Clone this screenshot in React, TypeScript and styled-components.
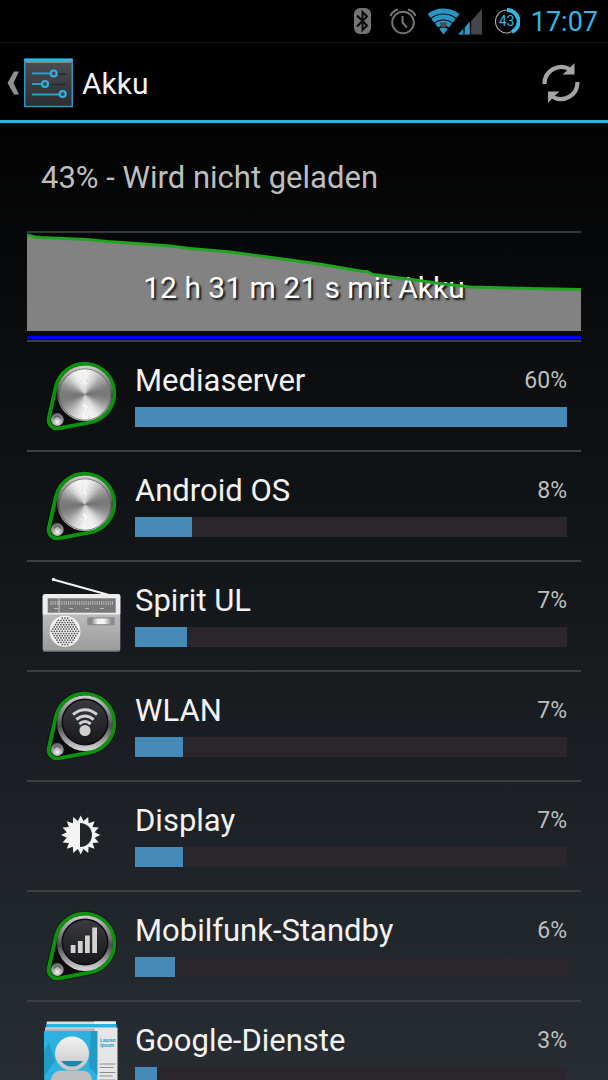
import React from 'react';
import styled, { createGlobalStyle } from 'styled-components';

const GlobalStyle = createGlobalStyle`
  * { box-sizing: border-box; }
  html, body { margin: 0; background: #000; }
  body { font-family: Roboto, "Liberation Sans", sans-serif; color: #f3f3f3; }
`;

const Screen = styled.div`
  height: 100vh;
  display: flex;
  flex-direction: column;
  overflow: hidden;
  background: linear-gradient(#000 0%, #000 6%, #272d33 100%);
`;

const StatusBar = styled.div`
  flex: none;
  height: 43px;
  padding: 0 10px;
  display: flex;
  align-items: center;
  justify-content: flex-end;
  gap: 11px;
  background: #000;
  border-bottom: 1px solid #161616;
`;

const Clock = styled.time`
  padding-top: 2px;
  font-size: 27px;
  line-height: 40px;
  color: #33b5e5;
`;

const ActionBar = styled.header`
  flex: none;
  height: 80px;
  padding: 2px 25px 0 6px;
  display: flex;
  align-items: center;
  background: #000;
  border-bottom: 3px solid #2ab4e4;
`;

const BarButton = styled.button`
  display: flex;
  align-items: center;
  gap: 4px;
  padding: 0;
  border: 0;
  background: none;
  color: inherit;
`;

const Title = styled.h1`
  flex: 1;
  margin: 2px 0 0 9px;
  font-size: 30px;
  line-height: 36px;
  font-weight: 400;
`;

const Content = styled.main`
  flex: 1;
  min-height: 0;
  padding: 0 27px;
  overflow-y: auto;
  scrollbar-width: none;
`;

const Summary = styled.p`
  margin: 0;
  padding: 2px 14px 0;
  font-size: 31px;
  line-height: 106px;
  color: #bebebe;
`;

const History = styled.section`
  display: grid;
  height: 109px;
  border-top: 2px solid #343638;
  > * { grid-area: 1 / 1; }
`;

const Plot = styled.svg`
  display: block;
  width: 100%;
  height: 107px;
`;

const Duration = styled.p`
  margin: 0;
  padding-top: 37px;
  text-align: center;
  font-size: 30px;
  line-height: 36px;
  color: #fff;
  text-shadow: 2px 2px 2px #101418;
`;

const List = styled.ul`
  margin: 0;
  padding: 0;
  list-style: none;
`;

const Row = styled.li`
  height: 110px;
  padding-right: 14px;
  display: flex;
  align-items: center;
  gap: 14px;
  border-top: 2px solid #3b3f42;
`;

const IconSlot = styled.span`
  flex: none;
  width: 94px;
  padding-bottom: 2px;
  display: flex;
  justify-content: flex-end;
`;

const Usage = styled.div`
  flex: 1;
  display: flex;
  flex-direction: column;
  gap: 8px;
  padding-bottom: 2px;
`;

const Labels = styled.div`
  display: flex;
  justify-content: space-between;
  align-items: center;
  line-height: 36px;
`;

const Name = styled.span`
  font-size: 31px;
`;

const Percent = styled.span`
  font-size: 23px;
  color: #bebebe;
`;

const Track = styled.div`
  height: 20px;
  background: #2a262c;
`;

const Fill = styled.div`
  height: 100%;
  background: #468bb8;
`;

const BluetoothIcon = () => (
  <svg width="25" height="28" viewBox="0 0 25 28" aria-label="Bluetooth">
    <rect x="1" y="1" width="17" height="26" rx="6" fill="#747474" />
    <path d="M4 8.500 14 18.500 9.500 23V5l4.500 4.500L4 19.500" fill="none" stroke="#0a0a0a" strokeWidth="2" />
  </svg>
);

const AlarmIcon = () => (
  <svg width="27" height="28" viewBox="0 0 27 28" fill="none" stroke="#747474" aria-label="Wecker">
    <circle cx="14" cy="15.500" r="10.800" strokeWidth="2" />
    <path d="M13.500 9V15.500l4.500 5" strokeWidth="2" />
    <path d="M1.500 9Q3.500 4 9 2.500M26.500 9Q24.500 4 19 2.500" strokeWidth="2.200" />
  </svg>
);

const NetworkIcon = () => (
  <svg width="56" height="28" viewBox="0 0 56 28" aria-label="WLAN und Mobilfunk">
    <defs>
      <clipPath id="fan"><path d="M16.500 27.500-1 5Q16.500-4 34 5Z" /></clipPath>
    </defs>
    <g clipPath="url(#fan)" fill="none" stroke="#2b95c4" strokeWidth="4.900">
      <circle cx="16.500" cy="27.500" r="23.500" />
      <circle cx="16.500" cy="27.500" r="17.500" />
      <circle cx="16.500" cy="27.500" r="11.500" />
      <circle cx="16.500" cy="27.500" r="3.500" strokeWidth="7" />
    </g>
    <path d="M12.500 15.500h8l-2 5h-4z" fill="#4b4b4f" />
    <path d="M32 27.500 55 2V27.500z" fill="#45464b" />
    <path d="M31 27.500 43 14.500V27.500z" fill="#2b95c4" />
    <path d="M37 17V27.500M43.500 10V27.500" stroke="#000" strokeWidth="1.200" />
  </svg>
);

const BatteryIcon = () => (
  <svg width="26" height="28" viewBox="0 0 26 28" aria-label="Akku 43 %">
    <circle cx="13" cy="14.500" r="11.500" fill="none" stroke="#a8a8a8" strokeWidth="1.200" />
    <path d="M13 3A11.500 11.500 0 0 1 18 24.900" fill="none" stroke="#33b5e5" strokeWidth="4" />
    <text x="12.500" y="19" textAnchor="middle" fontSize="14" fill="#33b5e5">43</text>
  </svg>
);

const ChevronIcon = () => (
  <svg width="14" height="26" viewBox="0 0 14 26">
    <path d="M8 1.500H13L7.500 13 13 24.500H8L1.500 13z" fill="#8f8f8f" />
  </svg>
);

const SettingsIcon = () => (
  <svg width="49" height="50" viewBox="0 0 49 50">
    <defs>
      <linearGradient id="slate" x1="0" y1="0" x2="0" y2="1">
        <stop offset="0" stopColor="#4c4e51" />
        <stop offset="1" stopColor="#2c2d2f" />
      </linearGradient>
    </defs>
    <rect x="0.750" y="1.500" width="47.500" height="47" fill="url(#slate)" stroke="#2796c4" strokeWidth="1.500" />
    <path d="M0.500 1.800H48.500" stroke="#33b5e5" strokeWidth="2.600" />
    <path d="M1.500 4H47.500" stroke="#9aa0a4" strokeWidth="1.500" />
    <path d="M8 16H42M8 26.500H42" stroke="#1f2a30" strokeWidth="1.500" />
    <path d="M8 15.500H27M8 26H18M8 36.500H36" stroke="#2a9fcb" strokeWidth="2" />
    <g fill="#44484b" stroke="#2fb0dd" strokeWidth="2.200">
      <circle cx="29.700" cy="15.500" r="3" />
      <circle cx="21" cy="26" r="3" />
      <circle cx="38.700" cy="36" r="3" />
    </g>
  </svg>
);

const RefreshIcon = () => (
  <svg width="44" height="44" viewBox="0 0 44 44">
    <path d="M5.500 23A16.700 16.700 0 0 1 31 8.500M38.500 21A16.700 16.700 0 0 1 13 35.500" fill="none" stroke="#a4a4a4" strokeWidth="4.200" />
    <path d="M35.500 2V13.500H23.500L28 9.500ZM9 42V30.500H20.500L16 34.500Z" fill="#a4a4a4" />
  </svg>
);

const WEDGES = 72;

const wedge = (index: number, cx: number, cy: number, r: number) => {
  const a = (index / WEDGES) * Math.PI * 2;
  const b = a + (Math.PI * 2) / WEDGES + 0.02;
  const wave = Math.pow(Math.abs(Math.sin(a + 0.12)), 2);
  const side = Math.pow(Math.abs(Math.cos(a - 0.9)), 8) * 0.1;
  const light = Math.round(122 + 122 * Math.min(1, wave + side));
  return (
    <path
      key={index}
      d={`M${cx} ${cy}L${cx + r * Math.cos(a)} ${cy + r * Math.sin(a)}L${cx + r * Math.cos(b)} ${cy + r * Math.sin(b)}Z`}
      fill={`rgb(${light},${light},${light})`}
    />
  );
};

const Knob = ({ children }: { children?: React.ReactNode }) => (
  <svg width="80" height="80" viewBox="0 0 80 80">
    <defs>
      <linearGradient id="rim" x1="0" y1="0" x2="0" y2="1">
        <stop offset="0" stopColor="#d0d0d0" />
        <stop offset="0.300" stopColor="#858585" />
        <stop offset="0.550" stopColor="#4c4c4c" />
        <stop offset="1" stopColor="#dcdcdc" />
      </linearGradient>
      <linearGradient id="well" x1="0" y1="0" x2="0" y2="1">
        <stop offset="0" stopColor="#3a3b3f" />
        <stop offset="1" stopColor="#17181b" />
      </linearGradient>
      <radialGradient id="rivet" cx="0.500" cy="0.700" r="0.600">
        <stop offset="0" stopColor="#f8f8f8" />
        <stop offset="1" stopColor="#6c6c6c" />
      </radialGradient>
    </defs>
    <path d="M14.800 31.800A29.600 29.600 0 1 1 49.100 67.400L17.500 73.300A8.400 8.400 0 0 1 7.800 63.200Z" fill="none" stroke="#000" strokeOpacity="0.300" strokeWidth="6" />
    <circle cx="43.700" cy="38.300" r="28.400" fill="url(#rim)" />
    <path d="M15.500 42 16 58 30 63.500A28.400 28.400 0 0 1 15.500 42Z" fill="#0b0c0e" />
    <path d="M14.800 31.800A29.600 29.600 0 1 1 49.100 67.400L17.500 73.300A8.400 8.400 0 0 1 7.800 63.200Z" fill="#0b0c0e" stroke="#0b930b" strokeWidth="3.800" />
    <circle cx="43.900" cy="38.200" r="27.800" fill="url(#rim)" />
    {children ? (
      <>
        <circle cx="44" cy="37" r="23.500" fill="#0c0c0e" />
        <circle cx="44" cy="37" r="22" fill="url(#well)" />
        {children}
      </>
    ) : (
      <>
        <circle cx="44" cy="39.500" r="26" fill="#6a6a6a" />
        {Array.from({ length: WEDGES }, (_, i) => wedge(i, 44, 39.5, 25.2))}
      </>
    )}
    <circle cx="16.300" cy="64.500" r="6.500" fill="url(#rivet)" />
    <path d="M13 63.500A3.500 3.500 0 0 1 19.600 63.500" fill="none" stroke="#5c5c5c" strokeWidth="1.200" />
  </svg>
);

const WifiKnob = () => (
  <Knob>
    <g fill="none" stroke="#d2d2d2" strokeWidth="3">
      <path d="M32 29.500Q44 20 56 29.500" />
      <path d="M35.300 34.500Q44 27.500 52.700 34.500" />
      <path d="M38.300 39Q44 34 49.700 39" />
    </g>
    <circle cx="44" cy="45.500" r="5.600" fill="#cfcfcf" />
  </Knob>
);

const CellKnob = () => (
  <Knob>
    <path d="M29.700 40h4.800v8h-4.800zM36.900 36h4.800v12h-4.800zM44 30.500h4.800V48H44zM51.200 22.500H56V48h-4.800z" fill="#d2d2d2" />
  </Knob>
);

const grille: React.ReactNode[] = [];
for (let row = -6; row <= 6; row++) {
  for (let col = -5; col <= 5; col++) {
    const x = col * 2.7 + (row % 2 ? 1.35 : 0);
    const y = row * 2.2;
    if (Math.hypot(x, y) < 13.6) {
      grille.push(<circle key={`${row}:${col}`} cx={24 + x} cy={56.3 + y} r="0.85" fill="#555" />);
    }
  }
}

const RadioIcon = () => (
  <svg width="80" height="80" viewBox="0 0 80 80">
    <defs>
      <linearGradient id="case" x1="0" y1="0" x2="0" y2="1">
        <stop offset="0" stopColor="#cdcdcd" />
        <stop offset="1" stopColor="#9a9a9a" />
      </linearGradient>
      <linearGradient id="glass">
        <stop offset="0" stopColor="#777" />
        <stop offset="0.350" stopColor="#f4f4f4" />
        <stop offset="0.650" stopColor="#f4f4f4" />
        <stop offset="1" stopColor="#888" />
      </linearGradient>
    </defs>
    <path d="M12 4.500 68 20" stroke="#f2f2f2" strokeWidth="2.200" />
    <circle cx="12.500" cy="4.500" r="1.700" fill="#f2f2f2" />
    <rect x="1.700" y="19" width="77.600" height="57.500" rx="2.500" fill="url(#case)" />
    <path d="M1.700 39.500V21.500Q1.700 19 4.200 19H76.800Q79.300 19 79.300 21.500V39.500Z" fill="#ececec" />
    <rect x="6.700" y="23.300" width="68" height="14.400" fill="#777" />
    <path d="M9.500 28H72" stroke="#b4b4b4" strokeWidth="4" strokeDasharray="1 1.200" />
    <path d="M13 33.500h4M28 33.500h4M44 33.500h4M59 33.500h4" stroke="#bbb" strokeWidth="1.200" />
    <path d="M18 23.500V37.500" stroke="#ccc" strokeWidth="1" />
    <circle cx="24" cy="56.300" r="15.500" fill="#efefef" />
    {grille}
    <rect x="46.300" y="42.300" width="27.400" height="8" fill="#8b8b8b" />
    <rect x="49.500" y="43.500" width="21" height="5.600" fill="url(#glass)" />
    <path d="M2 75.800H79" stroke="#777" strokeWidth="1" />
  </svg>
);

const rays = Array.from({ length: 32 }, (_, i) => {
  const r = i % 2 ? 14.2 : 19.6;
  const a = (i / 32) * Math.PI * 2 - Math.PI / 2;
  return `${39.7 + r * Math.cos(a)},${40 + r * Math.sin(a)}`;
}).join(' ');

const BrightnessIcon = () => (
  <svg width="80" height="80" viewBox="0 0 80 80">
    <polygon points={rays} fill="#f4f4f4" />
    <path d="M39 28A12 12 0 0 1 39 52Z" fill="#20252a" />
  </svg>
);

const PeopleIcon = () => (
  <svg width="80" height="80" viewBox="0 0 80 80">
    <defs>
      <linearGradient id="person" x1="0" y1="0" x2="0" y2="1">
        <stop offset="0" stopColor="#f4f4f4" />
        <stop offset="1" stopColor="#c4c4c4" />
      </linearGradient>
    </defs>
    <path d="M5.700 6.500H75V10H5.700z" fill="#ddd" />
    <path d="M5.200 9H75.500V13H5.200z" fill="#2cb2e0" />
    <path d="M53 6.500H75V9H53z" fill="#efefef" />
    <path d="M4 12.500H76.500V80H4z" fill="#e6e6e6" />
    <path d="M4 13.500H54V16H4z" fill="#b5b5b5" />
    <path d="M3 16H56.300V80H3z" fill="#2cb2e0" />
    <path d="M3 36 8 28 14 46 4 60V80H3zM50 16H56.300V60L48 52Z" fill="#2399c6" />
    <path d="M10 80V66Q10 55.500 22 55.500H40Q51 55.500 51 66V80Z" fill="#bdbfc1" />
    <circle cx="31" cy="38.500" r="17" fill="url(#person)" />
    <path d="M20 46H42Q38 51.500 31 51.500T20 46Z" fill="#2187ae" />
    <text x="59" y="27" fontSize="5" fontWeight="700" fill="#2ba3cf">Lauren</text>
    <text x="59" y="32" fontSize="5" fontWeight="700" fill="#2ba3cf">Ipsum</text>
    <path d="M58.500 49h16M58.500 52.500h14M58.500 57.500h16M58.500 61h13M58.500 65h16" stroke="#8e8e8e" strokeWidth="1.200" />
  </svg>
);

interface Consumer {
  name: string;
  percent: number;
  fill: number;
  icon: React.ReactNode;
}

const consumers: Consumer[] = [
  { name: 'Mediaserver', percent: 60, fill: 100, icon: <Knob /> },
  { name: 'Android OS', percent: 8, fill: 13.1, icon: <Knob /> },
  { name: 'Spirit UL', percent: 7, fill: 12.1, icon: <RadioIcon /> },
  { name: 'WLAN', percent: 7, fill: 11.1, icon: <WifiKnob /> },
  { name: 'Display', percent: 7, fill: 11.1, icon: <BrightnessIcon /> },
  { name: 'Mobilfunk-Standby', percent: 6, fill: 9.2, icon: <CellKnob /> },
  { name: 'Google-Dienste', percent: 3, fill: 5, icon: <PeopleIcon /> },
];

const LEVEL =
  '0,2 8,4 14,4.500 48,6 60,6.500 80,8.500 103,10 143,13 163,15.500 203,19 233,23 263,27 277,29 295,31.500 318,35.500 336,38.500 340,38.500 346,41.500 373,45 413,50.500 443,54 473,54.700 513,55.700 554,56.500';

export default function App() {
  return (
    <Screen>
      <GlobalStyle />
      <StatusBar>
        <BluetoothIcon />
        <AlarmIcon />
        <NetworkIcon />
        <BatteryIcon />
        <Clock>17:07</Clock>
      </StatusBar>
      <ActionBar>
        <BarButton type="button" aria-label="Zurück">
          <ChevronIcon />
          <SettingsIcon />
        </BarButton>
        <Title>Akku</Title>
        <BarButton type="button" aria-label="Aktualisieren">
          <RefreshIcon />
        </BarButton>
      </ActionBar>
      <Content>
        <Summary>43% - Wird nicht geladen</Summary>
        <History>
          <Plot viewBox="0 0 554 107" preserveAspectRatio="none">
            <polygon points={`${LEVEL} 554,98 0,98`} fill="#828282" />
            <rect x="0" y="103" width="554" height="3" fill="#0000fa" />
          </Plot>
          <Duration>12 h 31 m 21 s mit Akku</Duration>
          <Plot viewBox="0 0 554 107" preserveAspectRatio="none">
            <polyline points={LEVEL} fill="none" stroke="#1fa51f" strokeWidth="3" />
          </Plot>
        </History>
        <List>
          {consumers.map((item) => (
            <Row key={item.name}>
              <IconSlot>{item.icon}</IconSlot>
              <Usage>
                <Labels>
                  <Name>{item.name}</Name>
                  <Percent>{item.percent}%</Percent>
                </Labels>
                <Track
                  role="progressbar"
                  aria-label={item.name}
                  aria-valuenow={item.percent}
                  aria-valuemin={0}
                  aria-valuemax={100}
                >
                  <Fill style={{ width: `${item.fill}%` }} />
                </Track>
              </Usage>
            </Row>
          ))}
        </List>
      </Content>
    </Screen>
  );
}
